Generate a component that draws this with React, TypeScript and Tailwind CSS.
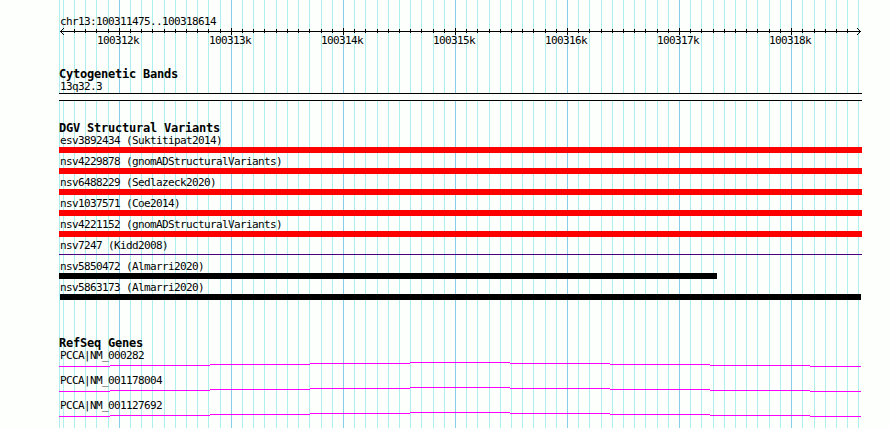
const WIDTH = 890
const HEIGHT = 428
const LEFT = 59
const RIGHT = 862

const label = "font-['DejaVu_Sans_Mono',monospace] text-[11px] leading-[12px] tracking-[-0.622px] whitespace-pre text-black"
const heading = "font-['DejaVu_Sans_Mono',monospace] text-[12px] leading-[13px] font-bold tracking-[-0.224px] whitespace-pre text-black"

// one line per 100 bp, a darker one per kb
const gridLines = Array.from({ length: 72 }, (_, n) => {
    const i = n - 5
    return { x: Math.floor(119.33 + i * 11.2045), major: i % 10 === 0 }
})

const kbLabels = ['100312k', '100313k', '100314k', '100315k', '100316k', '100317k', '100318k']

const variants = [
    { name: 'esv3892434 (Suktitipat2014)', bar: 'h-1.5 w-[803px] bg-[#ff0000]' },
    { name: 'nsv4229878 (gnomADStructuralVariants)', bar: 'h-1.5 w-[803px] bg-[#ff0000]' },
    { name: 'nsv6488229 (Sedlazeck2020)', bar: 'h-1.5 w-[803px] bg-[#ff0000]' },
    { name: 'nsv1037571 (Coe2014)', bar: 'h-1.5 w-[803px] bg-[#ff0000]' },
    { name: 'nsv4221152 (gnomADStructuralVariants)', bar: 'h-1.5 w-[803px] bg-[#ff0000]' },
    { name: 'nsv7247 (Kidd2008)', bar: 'mt-0.5 h-px w-[803px] bg-[#4b0082]' },
    { name: 'nsv5850472 (Almarri2020)', bar: 'h-1.5 w-[658px] bg-black' },
    { name: 'nsv5863173 (Almarri2020)', bar: 'ml-px h-1.5 w-[801px] bg-black' },
]

const genes = ['PCCA|NM_000282', 'PCCA|NM_001178004', 'PCCA|NM_001127692']

// x, y, width of every intron step
const intron = [
    [0, 4, 51],
    [51, 3, 100],
    [151, 2, 100],
    [251, 1, 100],
    [351, 0, 100],
    [451, 1, 100],
    [551, 2, 100],
    [651, 3, 100],
    [751, 4, 51],
]

function Grid() {
    return (
        <svg className="absolute inset-0" width={WIDTH} height={HEIGHT} shapeRendering="crispEdges">
            <rect x={LEFT} y={0} width={1} height={HEIGHT} fill="#afeeee" />
            {gridLines.map(({ x, major }) => (
                <rect key={x} x={x} y={0} width={1} height={HEIGHT} fill={major ? '#87ceeb' : '#afeeee'} />
            ))}
        </svg>
    )
}

function Ruler() {
    return (
        <svg className="block" width={RIGHT - LEFT} height={8} viewBox="59 28 803 8" shapeRendering="crispEdges">
            <rect x={60} y={31} width={801} height={1} />
            {gridLines.filter(({ x }) => x > 70 && x < 855).map(({ x, major }) => (
                <rect key={x} x={x} y={major ? 28 : 29} width={1} height={major ? 7 : 4} />
            ))}
            {[1, 2, 3].map((d) => (
                <g key={d}>
                    <rect x={60 + d} y={31 - d} width={1} height={1} />
                    <rect x={60 + d} y={31 + d} width={1} height={1} />
                    <rect x={860 - d} y={31 - d} width={1} height={1} />
                    <rect x={860 - d} y={31 + d} width={1} height={1} />
                </g>
            ))}
        </svg>
    )
}

function Gene({ name }: { name: string }) {
    return (
        <div className="h-[25px]">
            <div className={`pl-px ${label}`}>{name}</div>
            <svg className="block" width={802} height={5} shapeRendering="crispEdges">
                {intron.map(([x, y, w]) => (
                    <rect key={x} x={x} y={y} width={w} height={1} fill="#ff00ff" />
                ))}
            </svg>
        </div>
    )
}

export default function App() {
    return (
        <div className="relative h-[428px] w-[890px] overflow-hidden bg-[#fcfffc]">
            <Grid />
            <main className="relative flex h-full w-[862px] flex-col pl-[59px]">
                <section className="h-[68px] pt-4">
                    <div className={`h-3 pl-px ${label}`}>chr13:100311475..100318614</div>
                    <Ruler />
                    <div className={`flex gap-[70px] pl-[38px] -mt-px ${label}`}>
                        {kbLabels.map((text) => (
                            <span key={text} className="w-[42px]">{text}</span>
                        ))}
                    </div>
                </section>

                <section className="h-[54px]">
                    <h2 className={heading}>Cytogenetic Bands</h2>
                    <div className={`h-3 pl-px ${label}`}>13q32.3</div>
                    <div className="h-2 border-y border-black bg-[#fcfffc]" />
                </section>

                <section className="h-[215px]">
                    <h2 className={heading}>DGV Structural Variants</h2>
                    {variants.map(({ name, bar }) => (
                        <div key={name} className="h-[21px]">
                            <div className={`pl-px ${label}`}>{name}</div>
                            <div className={bar} />
                        </div>
                    ))}
                </section>

                <section>
                    <h2 className={heading}>RefSeq Genes</h2>
                    {genes.map((name) => (
                        <Gene key={name} name={name} />
                    ))}
                </section>
            </main>
        </div>
    )
}
